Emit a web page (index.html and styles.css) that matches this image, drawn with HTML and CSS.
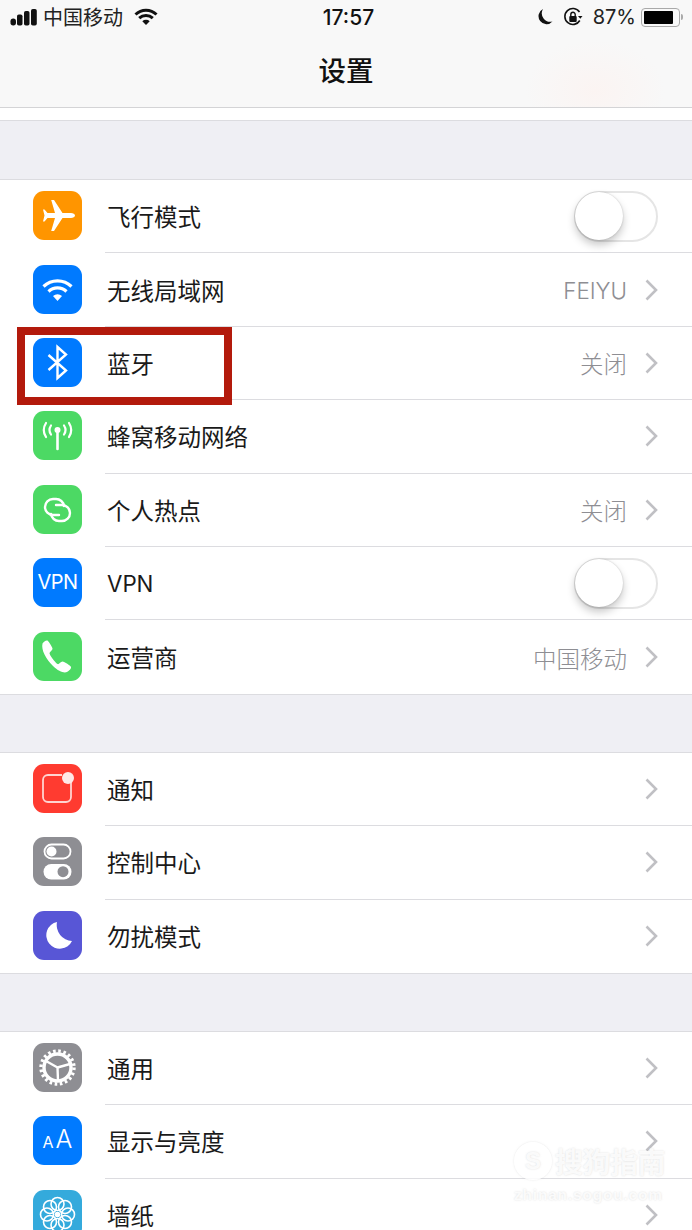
FILE: index.html
```html
<!DOCTYPE html>
<html lang="zh-CN">
<head>
<meta charset="utf-8">
<title>设置</title>
<link rel="stylesheet" href="styles.css">
</head>
<body>
<div class="phone">
  <header class="topbar">
    <div class="status">
      <div class="status-left">
        <svg class="signal" viewBox="0 0 27 17"><rect x="0.500" y="9.500" width="5.500" height="7" rx="2.700"/><rect x="7" y="5.500" width="5.500" height="11" rx="1.800"/><rect x="14" y="2" width="5.500" height="14.500" rx="1.800"/><rect x="21" y="0" width="5.800" height="16.500" rx="1.800"/></svg>
        <span class="carrier">中国移动</span>
        <svg class="s-wifi" viewBox="0 0 24 18"><path d="M1.500 6.500a15 15 0 0 1 21 0M5.200 10.200a10 10 0 0 1 13.600 0" fill="none" stroke="#111" stroke-width="3"/><path d="M8.300 13.300a5.500 5.500 0 0 1 7.400 0L12 17z" fill="#111"/></svg>
      </div>
      <span class="time">17:57</span>
      <div class="status-right">
        <svg class="s-moon" viewBox="0 0 16 18"><path d="M6 1a8 8 0 1 0 9.500 12.500A8.500 8.500 0 0 1 6 1z" fill="#111"/></svg>
        <svg class="s-lock" viewBox="0 0 20 20"><path d="M16.800 13.500A8 8 0 1 1 16.500 5" fill="none" stroke="#111" stroke-width="1.600"/><path d="M15 9h4.500l-2.200 2.800z" fill="#111"/><rect x="6.300" y="9" width="7.400" height="6" rx="1" fill="#111"/><path d="M7.800 9.500V7.500a2.200 2.200 0 0 1 4.400 0v2" fill="none" stroke="#111" stroke-width="1.400"/></svg>
        <span class="percent">87%</span>
        <span class="battery"><span class="battery-fill"></span></span>
        <span class="battery-nub"></span>
      </div>
    </div>
    <h1 class="title">设置</h1>
  </header>
  <div class="strip"></div>

  <div class="gap gap-first"></div>
  <ul class="group">
    <li class="row">
      <span class="icon orange"><svg viewBox="0 0 49 49"><path d="M42 24.500c0-1.300-2-2.500-4-2.500h-8.500L21 9h-2.800l3.800 13h-7.500l-3-3.500H10l1.500 6-1.500 6h1.500l3-3.500H22l-3.800 13H21l8.500-13H38c2 0 4-1.200 4-2.500z" fill="#fff"/></svg></span>
      <div class="row-body"><span class="label">飞行模式</span><span class="switch"><span class="knob"></span></span></div>
    </li>
    <li class="row">
      <span class="icon blue"><svg viewBox="0 0 49 49"><path d="M10.500 21.500a20 20 0 0 1 28 0M15.500 26.500a13 13 0 0 1 18 0" fill="none" stroke="#fff" stroke-width="3.200"/><path d="M20 31a7 7 0 0 1 9 0l-4.500 5z" fill="#fff"/></svg></span>
      <div class="row-body"><span class="label">无线局域网</span><span class="value latin">FEIYU</span><svg class="chev" viewBox="0 0 13 22"><path d="M1.500 1.500 11 11l-9.500 9.500"/></svg></div>
    </li>
    <li class="row">
      <span class="icon blue"><svg viewBox="0 0 49 49"><path d="M15.500 17 33 32.500 24.500 40V9l8.500 7.500L15.500 32" fill="none" stroke="#fff" stroke-width="2.400"/></svg></span>
      <div class="row-body"><span class="label">蓝牙</span><span class="value">关闭</span><svg class="chev" viewBox="0 0 13 22"><path d="M1.500 1.500 11 11l-9.500 9.500"/></svg></div>
    </li>
    <li class="row">
      <span class="icon green"><svg viewBox="0 0 49 49"><circle cx="24.500" cy="19" r="3" fill="#fff"/><path d="M24.500 21v17" stroke="#fff" stroke-width="2.600" stroke-linecap="round"/><path d="M18 14.500a8 8 0 0 0 0 9M31 14.500a8 8 0 0 1 0 9M13 12a13 13 0 0 0 0 14M36 12a13 13 0 0 1 0 14" fill="none" stroke="#fff" stroke-width="2.200" stroke-linecap="round"/></svg></span>
      <div class="row-body"><span class="label">蜂窝移动网络</span><svg class="chev" viewBox="0 0 13 22"><path d="M1.500 1.500 11 11l-9.500 9.500"/></svg></div>
    </li>
    <li class="row">
      <span class="icon green"><svg viewBox="0 0 49 49"><path d="M26 30h-6a8 8 0 0 1-8-8 8 8 0 0 1 8-8h3a8 8 0 0 1 8 7" fill="none" stroke="#fff" stroke-width="2.400" stroke-linecap="round"/><path d="M23 20h6a8 8 0 0 1 8 8 8 8 0 0 1-8 8h-3a8 8 0 0 1-8-7" fill="none" stroke="#fff" stroke-width="2.400" stroke-linecap="round"/></svg></span>
      <div class="row-body"><span class="label">个人热点</span><span class="value">关闭</span><svg class="chev" viewBox="0 0 13 22"><path d="M1.500 1.500 11 11l-9.500 9.500"/></svg></div>
    </li>
    <li class="row">
      <span class="icon blue icon-text vpn">VPN</span>
      <div class="row-body"><span class="label latin">VPN</span><span class="switch"><span class="knob"></span></span></div>
    </li>
    <li class="row">
      <span class="icon green"><svg viewBox="0 0 49 49"><path d="M9.500 11.500c1-2 3.500-3.500 5-3 1 .5 4.500 6 5 8 .3 1.500-2.500 3-3 4.500-.3 1.500 5.500 9.500 8 11 1.500.8 3-2.500 5-2.500 2 .3 8 4 8.500 5.500.5 1.500-2 4-4 5-3 1.300-8.500-.5-14-6-7-7-12-16-10.500-22.500z" fill="#fff"/></svg></span>
      <div class="row-body last"><span class="label">运营商</span><span class="value">中国移动</span><svg class="chev" viewBox="0 0 13 22"><path d="M1.500 1.500 11 11l-9.500 9.500"/></svg></div>
    </li>
  </ul>

  <div class="gap"></div>
  <ul class="group">
    <li class="row">
      <span class="icon red"><svg viewBox="0 0 49 49"><path d="M29 11H15a5 5 0 0 0-5 5v17a5 5 0 0 0 5 5h18a5 5 0 0 0 5-5V19" fill="none" stroke="#ffd4d0" stroke-width="1.800"/><circle cx="35" cy="14" r="6" fill="#ffe9e7"/></svg></span>
      <div class="row-body"><span class="label">通知</span><svg class="chev" viewBox="0 0 13 22"><path d="M1.500 1.500 11 11l-9.500 9.500"/></svg></div>
    </li>
    <li class="row">
      <span class="icon gray"><svg viewBox="0 0 49 49"><rect x="11.500" y="7.500" width="26" height="14" rx="7" fill="none" stroke="#fff" stroke-width="1.800"/><circle cx="18.500" cy="14.500" r="5" fill="#fff"/><rect x="10.500" y="27" width="28" height="15.500" rx="7.700" fill="#fff"/><circle cx="30" cy="34.700" r="5.500" fill="#8e8e93"/></svg></span>
      <div class="row-body"><span class="label">控制中心</span><svg class="chev" viewBox="0 0 13 22"><path d="M1.500 1.500 11 11l-9.500 9.500"/></svg></div>
    </li>
    <li class="row">
      <span class="icon purple"><svg viewBox="0 0 49 49"><path d="M24 11A13.500 13.500 0 1 0 39 30 16 16 0 0 1 24 11z" fill="#fff"/></svg></span>
      <div class="row-body last"><span class="label">勿扰模式</span><svg class="chev" viewBox="0 0 13 22"><path d="M1.500 1.500 11 11l-9.500 9.500"/></svg></div>
    </li>
  </ul>

  <div class="gap"></div>
  <ul class="group">
    <li class="row">
      <span class="icon gray"><svg viewBox="0 0 49 49"><circle cx="24.500" cy="24.500" r="16.500" fill="none" stroke="#fff" stroke-width="3.400" stroke-dasharray="2.600 2.600"/><circle cx="24.500" cy="24.500" r="13.500" fill="none" stroke="#fff" stroke-width="3.400"/><path d="M24.500 24.500 13 18M24.500 24.500 37 21M24.500 24.500 25 38" stroke="#fff" stroke-width="2.400"/></svg></span>
      <div class="row-body"><span class="label">通用</span><svg class="chev" viewBox="0 0 13 22"><path d="M1.500 1.500 11 11l-9.500 9.500"/></svg></div>
    </li>
    <li class="row">
      <span class="icon blue icon-text aa"><span class="aa-small">A</span><span class="aa-big">A</span></span>
      <div class="row-body"><span class="label">显示与亮度</span><svg class="chev" viewBox="0 0 13 22"><path d="M1.500 1.500 11 11l-9.500 9.500"/></svg></div>
    </li>
    <li class="row">
      <span class="icon teal"><svg viewBox="0 0 49 49"><g fill="none" stroke="#fff" stroke-width="1.600"><circle cx="24.500" cy="14" r="6.500"/><circle cx="24.500" cy="35" r="6.500"/><circle cx="14" cy="24.500" r="6.500"/><circle cx="35" cy="24.500" r="6.500"/><circle cx="17" cy="17" r="6.500"/><circle cx="32" cy="17" r="6.500"/><circle cx="17" cy="32" r="6.500"/><circle cx="32" cy="32" r="6.500"/></g><circle cx="24.500" cy="24.500" r="2.800" fill="#fff"/></svg></span>
      <div class="row-body"><span class="label">墙纸</span><svg class="chev" viewBox="0 0 13 22"><path d="M1.500 1.500 11 11l-9.500 9.500"/></svg></div>
    </li>
  </ul>

  <div class="callout"></div>

  <div class="watermark">
    <div class="wm-main">
      <span class="wm-logo">S</span>
      <span class="wm-name">搜狗指南</span>
    </div>
    <div class="wm-url">zhinan.sogou.com</div>
  </div>
</div>
</body>
</html>
```
FILE: styles.css
```css
* { box-sizing: border-box; }
html, body { margin: 0; padding: 0; height: 1230px; overflow: hidden; background: #fff; }
body {
  font-family: "Noto Sans CJK SC", "Noto Sans", sans-serif;
  color: #111;
}
.phone { position: relative; width: 692px; height: 1230px; overflow: hidden; }

.topbar {
  height: 108px;
  border-bottom: 1px solid #d4d4d6;
  background:
    radial-gradient(ellipse 70px 50px at 595px 90px, #fbf4f2 0%, rgba(251,244,242,0) 100%),
    #f8f8f8;
}
.status {
  height: 34px;
  display: grid;
  grid-template-columns: 1fr auto 1fr;
  align-items: center;
  padding: 0 9px 0 10px;
}
.status-left { display: flex; align-items: center; }
.signal { width: 27px; height: 17px; fill: #111; }
.carrier { font-size: 20px; line-height: 24px; margin-left: 6px; color: #222; }
.s-wifi { width: 24px; height: 18px; margin-left: 11px; }
.time { font-family: Inter, Roboto, sans-serif; font-size: 21px; font-weight: 500; margin-left: 4px; }
.status-right { display: flex; align-items: center; justify-content: flex-end; }
.s-moon { width: 16px; height: 18px; margin-right: 10px; }
.s-lock { width: 20px; height: 20px; margin-right: 10px; }
.percent { font-family: Inter, Roboto, sans-serif; font-size: 20px; margin-right: 5px; color: #222; }
.battery {
  width: 39px; height: 19px;
  border: 1.500px solid #a9a9a9;
  border-radius: 4px;
  padding: 2px;
  display: flex;
}
.battery-fill { width: 87%; background: #000; border-radius: 1px; }
.battery-nub { width: 2px; height: 6px; background: #aaa; margin-left: 1px; border-radius: 0 2px 2px 0; }
.title {
  margin: 0;
  margin-top: 10px;
  text-align: center;
  font-size: 27.500px;
  line-height: 50px;
  font-weight: 500;
}
.strip { height: 13px; background: #fff; border-bottom: 1px solid #dcdce0; }

.gap { height: 57px; background: #efeff4; }
.gap-first { height: 58px; }
.group {
  list-style: none;
  margin: 0; padding: 0;
  background: #fff;
  border-top: 1px solid #dcdce0;
  border-bottom: 1px solid #dcdce0;
}
.row { display: flex; align-items: center; height: 73.400px; padding-left: 33px; }
.icon {
  flex: none;
  width: 49px; height: 49px;
  margin-bottom: 2px;
  border-radius: 11px;
  overflow: hidden;
  display: block;
}
.icon svg { display: block; width: 49px; height: 49px; }
.orange { background: #ff9500; }
.blue { background: #007aff; }
.green { background: #4cd964; }
.red { background: #ff3b30; }
.gray { background: #8e8e93; }
.purple { background: #5856d6; }
.teal { background: #34aadc; }
.icon-text {
  display: flex; align-items: center; justify-content: center;
  color: #fff;
  font-family: Inter, Roboto, sans-serif;
}
.vpn { font-size: 20px; letter-spacing: -0.500px; padding-bottom: 2px; }
.aa { align-items: baseline; padding-top: 8px; }
.aa-small { font-size: 16px; margin-right: 2px; }
.aa-big { font-size: 25px; font-weight: 300; }

.row-body {
  flex: 1;
  align-self: stretch;
  margin-left: 23px;
  padding-left: 2px;
  padding-right: 34px;
  display: flex;
  align-items: center;
  border-bottom: 1px solid #dcdce0;
}
.row-body.last, .row:last-child .row-body { border-bottom: 0; }
.label { flex: 1; font-size: 23.500px; line-height: 30px; color: #1a1a1a; }
.label.latin { font-family: Inter, Roboto, sans-serif; font-size: 22.300px; padding-top: 2px; }
.value { font-size: 23.500px; line-height: 30px; color: #8e8e93; margin-right: 18px; margin-top: 1px; font-family: "Noto Sans CJK SC", sans-serif; font-weight: 300; }
.value.latin { font-family: Inter, Roboto, sans-serif; font-size: 22.400px; margin-top: 2px; }
.chev { width: 13px; height: 22px; flex: none; }
.chev path { fill: none; stroke: #c0c0c4; stroke-width: 2.600px; }

.switch {
  flex: none;
  width: 84px; height: 51px;
  border: 2px solid #e5e5e5;
  border-radius: 26px;
  background: #fff;
  position: relative;
}
.knob {
  position: absolute;
  left: -1px; top: -1px;
  width: 48px; height: 48px;
  border-radius: 50%;
  background: #fff;
  box-shadow: 0 5px 9px rgba(0,0,0,.22), 0 0 2px rgba(0,0,0,.2);
}

.callout {
  position: absolute;
  left: 17px; top: 327px;
  width: 215px; height: 78px;
  border: 8px solid #b31a0c;
}

.watermark {
  position: absolute;
  left: 514px; top: 1142px;
  width: 160px;
  color: rgba(255,255,255,.85);
  text-shadow: 0 0 2px rgba(170,170,170,.4);
}
.wm-main { display: flex; align-items: center; }
.wm-logo {
  width: 38px; height: 38px;
  border: 4px solid rgba(255,255,255,.85);
  border-radius: 50%;
  box-shadow: 0 0 2px rgba(170,170,170,.35);
  display: flex; align-items: center; justify-content: center;
  font: 700 24px "Liberation Sans", sans-serif;
}
.wm-name { font-size: 28px; line-height: 38px; margin-left: 3px; font-weight: 700; white-space: nowrap; letter-spacing: -0.500px; }
.wm-url { font: 700 15.500px/20px "Liberation Sans", sans-serif; margin-top: 5px; letter-spacing: .8px; white-space: nowrap; }
```
